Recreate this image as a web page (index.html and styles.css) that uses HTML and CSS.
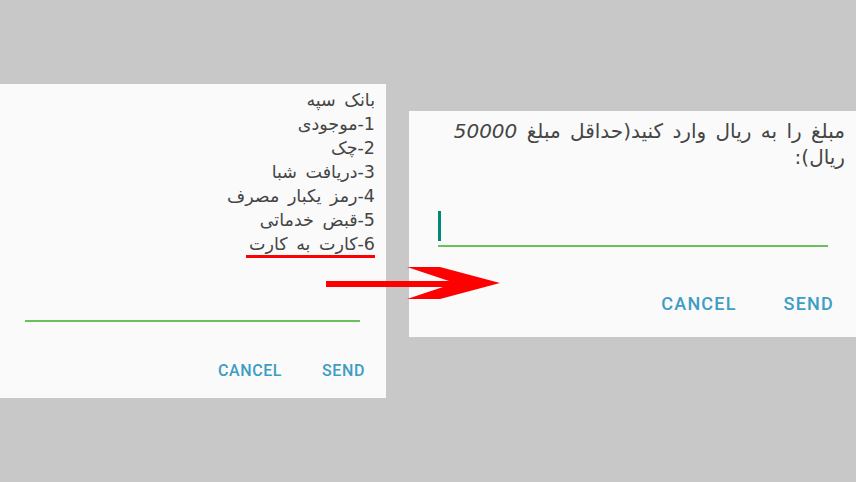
FILE: index.html
```html
<!DOCTYPE html>
<html lang="fa">
<head>
<meta charset="utf-8">
<link rel="stylesheet" href="styles.css">
</head>
<body>
<div class="stage">
  <div class="dialog dialog-left">
    <div class="menu" dir="rtl">
      <div>بانک سپه</div>
      <div>1-موجودی</div>
      <div>2-چک</div>
      <div>3-دریافت شبا</div>
      <div>4-رمز یکبار مصرف</div>
      <div>5-قبض خدماتی</div>
      <div><span class="marked">6-کارت به کارت</span></div>
    </div>
    <div class="field field-left"></div>
    <div class="actions actions-left">
      <span class="btn">CANCEL</span>
      <span class="btn">SEND</span>
    </div>
  </div>
  <div class="dialog dialog-right">
    <div class="prompt" dir="rtl">مبلغ را به ریال وارد کنید(حداقل مبلغ <i>50000</i><br>ریال):</div>
    <div class="field field-right"><span class="cursor"></span></div>
    <div class="actions actions-right">
      <span class="btn">CANCEL</span>
      <span class="btn">SEND</span>
    </div>
  </div>
  <svg class="arrow" width="856" height="482" viewBox="0 0 856 482">
    <rect x="326" y="281" width="130" height="6" fill="#ff0000"/>
    <polygon points="407,267 440,267 500,283 440,299 407,299 455,283" fill="#ff0000"/>
  </svg>
</div>
</body>
</html>
```
FILE: styles.css
```css
html, body {
  margin: 0;
  padding: 0;
}
body {
  background: #c8c8c8;
  width: 856px;
  height: 482px;
  overflow: hidden;
}
.stage {
  position: relative;
  display: flex;
  align-items: flex-start;
  gap: 23px;
  width: 856px;
  height: 482px;
}
.dialog {
  background: #fafafa;
  display: flex;
  flex-direction: column;
  box-sizing: border-box;
}
.dialog-left {
  width: 386px;
  height: 314px;
  margin-top: 84px;
  padding-top: 4px;
}
.dialog-right {
  flex: 1;
  height: 226px;
  margin-top: 111px;
  padding-top: 7px;
}
.menu {
  font-family: "DejaVu Sans", "Noto Sans", sans-serif;
  font-size: 17.5px;
  line-height: 24px;
  word-spacing: 3px;
  color: #454545;
  padding-right: 11px;
  text-align: right;
}
.marked {
  display: inline-block;
  border-bottom: 3px solid #ff0000;
  padding-left: 3px;
  line-height: 22px;
  margin-bottom: -1px;
}
.prompt {
  font-family: "DejaVu Sans", "Noto Sans", sans-serif;
  font-size: 20px;
  line-height: 26px;
  word-spacing: 3px;
  color: #454545;
  padding-right: 11px;
  text-align: right;
}
.prompt i {
  font-style: italic;
}
.field {
  border-bottom: 2px solid #6cc05c;
}
.field-left {
  margin: 63px 26px 0 25px;
  height: 0;
}
.field-right {
  margin: 41px 28px 0 29px;
  height: 34px;
  display: flex;
  align-items: flex-start;
}
.cursor {
  display: block;
  width: 3px;
  height: 30px;
  background: #00897b;
}
.actions {
  display: flex;
  justify-content: flex-end;
  font-family: "Roboto", "Liberation Sans", sans-serif;
  font-weight: 500;
  color: #3d9dc3;
}
.actions-left {
  margin-top: 39px;
  padding-right: 21px;
  gap: 40px;
  font-size: 16px;
  letter-spacing: 0.6px;
}
.actions-right {
  margin-top: 46px;
  padding-right: 22px;
  gap: 47px;
  font-size: 18px;
  letter-spacing: 1.2px;
}
.arrow {
  position: absolute;
  left: 0;
  top: 0;
  pointer-events: none;
}
```
